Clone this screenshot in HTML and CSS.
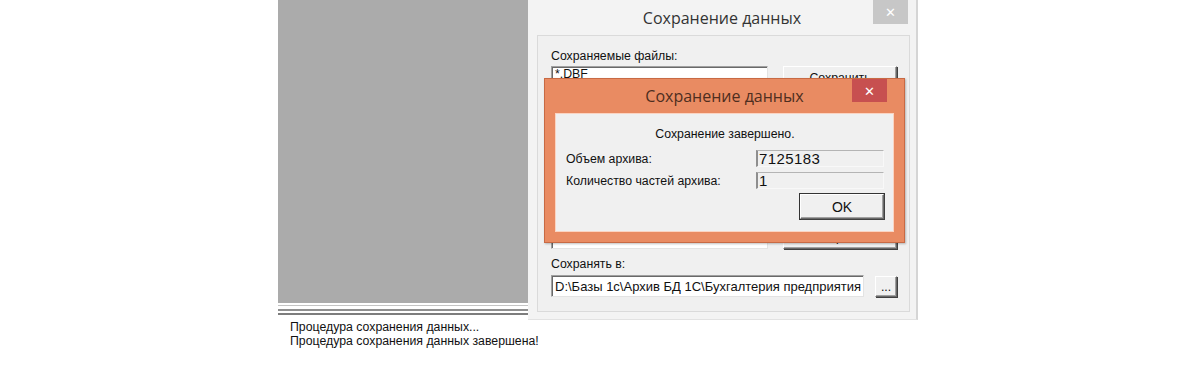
FILE: index.html
```html
<!DOCTYPE html>
<html lang="ru">
<head>
  <meta charset="UTF-8" />
  <title>Сохранение данных</title>
  <link rel="stylesheet" href="styles.css">
</head>
<body>

  <div class="app">
    <div class="workspace">
      <div class="left">
        <div class="canvas"></div>
        <div class="splitter"></div>
      </div>

      <div class="dialog">
        <div class="title">
          <span>Сохранение данных</span>
          <div class="close gray">&#x2715;</div>
        </div>
        <div class="panel">
          <label class="lbl">Сохраняемые файлы:</label>
          <div class="files-row">
            <div class="listbox">*.DBF</div>
            <div class="buttons">
              <button class="btn wide">Сохранить</button>
              <button class="btn wide">Закрыть</button>
            </div>
          </div>
          <label class="lbl">Сохранять в:</label>
          <div class="path-row">
            <div class="field path">D:\Базы 1с\Архив БД 1С\Бухгалтерия предприятия</div>
            <button class="btn dots">...</button>
          </div>
        </div>

        <div class="popup">
          <div class="title popup-title">
            <span>Сохранение данных</span>
            <div class="close red">&#x2715;</div>
          </div>
          <div class="popup-body">
            <div class="done">Сохранение завершено.</div>
            <div class="info-row">
              <span>Объем архива:</span>
              <div class="field info">7125183</div>
            </div>
            <div class="info-row">
              <span>Количество частей архива:</span>
              <div class="field info">1</div>
            </div>
            <div class="ok-row">
              <button class="btn ok">OK</button>
            </div>
          </div>
        </div>
      </div>
    </div>

    <div class="log">
      <div>Процедура сохранения данных...</div>
      <div>Процедура сохранения данных завершена!</div>
    </div>
  </div>

</body>
</html>
```

FILE: styles.css
```css
body {
  margin: 0;
  background: #fff;
  font-family: "Liberation Sans", Arial, sans-serif;
  font-size: 12.3px;
  color: #111;
}

.app {
  margin-left: 278px;
  width: 642px;
}

.workspace {
  display: flex;
  align-items: flex-start;
}

.left {
  width: 250px;
}

.canvas {
  height: 303px;
  background: #ababab;
}

.splitter {
  height: 13px;
  background:
    linear-gradient(#fff 0 2px, #c4c4c4 2px 3px, #fff 3px 6px, #8f8f8f 6px 8px, #fff 8px 10px, #7d7d7d 10px 12px, #fff 12px);
}

/* outer window */
.dialog {
  position: relative;
  width: 390px;
  height: 320px;
  background: #f3f3f3;
  border-right: 2px solid #d5d5d5;
  border-bottom: 1px solid #e2e2e2;
  box-sizing: border-box;
}

.title {
  height: 35px;
  position: relative;
  display: flex;
  align-items: center;
  justify-content: center;
  font-family: "Open Sans", "Noto Sans", sans-serif;
  font-size: 16px;
  color: #333;
}

.close {
  position: absolute;
  top: 0;
  width: 35px;
  height: 24px;
  color: #fff;
  font-size: 13px;
  display: flex;
  align-items: center;
  justify-content: center;
}

.close.gray {
  right: 8px;
  background: #c7c7c7;
}

.close.red {
  right: 8px;
  background: #c75050;
}

.panel {
  margin: 0 6px 0 9px;
  height: 277px;
  box-sizing: border-box;
  border: 1px solid #dadada;
  background: #f0f0f0;
  padding: 13px 12px 0 13px;
}

.lbl {
  display: block;
  margin-bottom: 3px;
  line-height: 14px;
}

.files-row {
  display: flex;
  gap: 15px;
  height: 183px;
  margin-bottom: 8px;
}

.listbox {
  width: 217px;
  background: #fff;
  border: 1px solid #a0a0a0;
  border-right-color: #e3e3e3;
  border-bottom-color: #e3e3e3;
  box-shadow: inset 1px 1px 0 #696969;
  padding: 1px 3px;
  box-sizing: border-box;
  line-height: 13px;
}

.buttons {
  display: flex;
  flex-direction: column;
  justify-content: space-between;
}

.btn {
  font-family: "Liberation Sans", Arial, sans-serif;
  font-size: 12.3px;
  color: #111;
  background: #f0f0f0;
  border: 1px solid #fff;
  border-right-color: #696969;
  border-bottom-color: #696969;
  box-shadow: inset -1px -1px 0 #a0a0a0, 1px 1px 0 #404040;
  padding: 0;
}

.btn.wide {
  width: 114px;
  height: 24px;
}

.path-row {
  display: flex;
  gap: 11px;
  margin-top: 4px;
}

.field {
  border: 1px solid #a0a0a0;
  border-right-color: #e3e3e3;
  border-bottom-color: #e3e3e3;
  box-shadow: inset 1px 1px 0 #696969;
  box-sizing: border-box;
  white-space: nowrap;
  overflow: hidden;
}

.path {
  width: 315px;
  height: 22px;
  background: #fff;
  padding: 3px 3px;
  line-height: 15px;
  font-size: 13px;
}

.btn.dots {
  width: 22px;
  height: 21px;
  margin-top: 1px;
  line-height: 12px;
}

/* message box on top */
.popup {
  position: absolute;
  left: 16px;
  top: 78px;
  width: 361px;
  height: 165px;
  box-sizing: border-box;
  background: #e98b62;
  border: 1px solid #c86a44;
  box-shadow: 1px 1px 2px rgba(0, 0, 0, 0.25);
  padding: 0 10px 10px 10px;
  display: flex;
  flex-direction: column;
}

.popup-title {
  height: 34px;
  color: #4e2e20;
  padding-right: 0;
}

.popup-title .close {
  top: 0;
  right: 7px;
  height: 23px;
}

.popup-body {
  flex: 1;
  background: #f0f0f0;
  border: 1px solid #fbd4c2;
  padding: 13px 9px 0 10px;
}

.done {
  text-align: center;
  line-height: 14px;
  margin-bottom: 9px;
}

.info-row {
  display: flex;
  justify-content: space-between;
  align-items: center;
  height: 17px;
  margin-bottom: 5px;
}

.field.info {
  width: 128px;
  height: 17px;
  background: #f0f0f0;
  padding: 0 1px;
  line-height: 15px;
  font-size: 15px;
  letter-spacing: 0.4px;
  box-shadow: none;
  border-color: #b4b4b4 #f8f8f8 #f8f8f8 #8e8e8e;
  border-left-width: 2px;
}

.ok-row {
  display: flex;
  justify-content: flex-end;
  margin-top: 3px;
}

.btn.ok {
  width: 84px;
  height: 25px;
  font-size: 14px;
  border-color: #fff #696969 #696969 #fff;
  box-shadow: inset -1px -1px 0 #a0a0a0, 1px 1px 0 #404040, 0 0 0 1px #333;
}

.log {
  line-height: 14px;
  padding: 0 0 0 12px;
}
```
